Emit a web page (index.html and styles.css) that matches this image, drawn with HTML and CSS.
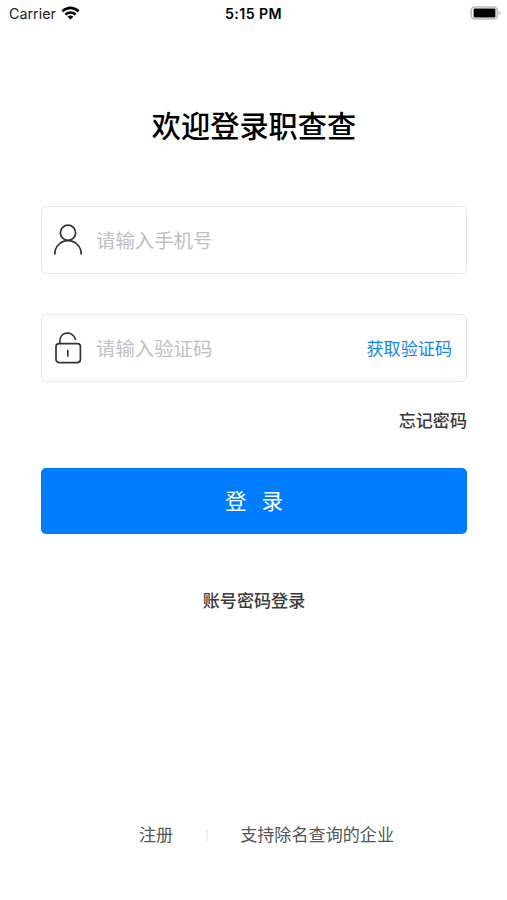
FILE: index.html
```html
<!DOCTYPE html>
<html lang="zh-CN">
<head>
<meta charset="UTF-8">
<meta name="viewport" content="width=device-width, initial-scale=1">
<title>登录</title>
<link rel="stylesheet" href="styles.css">
</head>
<body>
<div class="screen">
  <header class="status">
    <div class="carrier">Carrier
      <svg class="wifi" width="19" height="14" viewBox="0 0 19 14"><path d="M9.5 13.6 6.6 10.7Q9.5 8.5 12.4 10.7Z" fill="#000"/><path d="M4.4 8.6Q9.5 4.4 14.6 8.6M1.3 5.3Q9.5-1.5 17.7 5.3" fill="none" stroke="#000" stroke-width="2.6"/></svg>
    </div>
    <time class="time">5:15 PM</time>
    <svg class="battery" width="31" height="14" viewBox="0 0 31 14"><rect x="1.2" y="1" width="26" height="12" rx="3.4" fill="#fff" stroke="#bbb" stroke-width="1.6"/><rect x="3.6" y="2.6" width="21.8" height="8.8" rx="1.2" fill="#000"/><path d="M28.6 4.8Q30.4 5.5 30.4 7T28.6 9.2Z" fill="#bbb"/></svg>
  </header>
  <main class="content">
    <h1 class="title">欢迎登录职查查</h1>
    <div class="field">
      <svg class="icon" width="30" height="32" viewBox="0 0 30 32"><circle cx="15" cy="8.8" r="7.6"/><path d="M1.8 29.9A13.2 13.3 0 0 1 28.2 29.9"/></svg>
      <span class="placeholder">请输入手机号</span>
    </div>
    <div class="field">
      <svg class="icon" width="30" height="32" viewBox="0 0 30 32"><rect x="3" y="11.6" width="24.4" height="19" rx="3"/><path d="M6.8 11.3V9C7-.8 19.8-1.4 22.4 7.3M14.8 18.6v5.4"/></svg>
      <span class="placeholder">请输入验证码</span>
      <a class="code">获取验证码</a>
    </div>
    <a class="forgot">忘记密码</a>
    <button class="login">登<span class="gap"></span>录</button>
    <a class="switch">账号密码登录</a>
  </main>
  <footer class="footer"><a>注册</a><span class="divider"></span><a>支持除名查询的企业</a></footer>
</div>
</body>
</html>
```
FILE: styles.css
```css
* { box-sizing: border-box; }
body { margin: 0; background: #fff; color: #3a3a3a; font-family: Inter, "Noto Sans CJK SC", sans-serif; }
.screen { height: 900px; display: flex; flex-direction: column; }
.status { height: 26px; padding: 0 6px 0 9px; display: grid; grid-template-columns: 1fr auto 1fr; align-items: center; color: #000; font-size: 14.3px; }
.carrier { display: flex; align-items: center; gap: 5px; color: #222; }
.time { font-weight: 600; font-size: 14.2px; letter-spacing: .4px; margin: 0 3px 0 0; }
.battery { justify-self: end; }
.content { display: flex; flex-direction: column; padding: 0 40px 0 41px; }
.title { margin: 80px 0 58px; height: 42px; line-height: 42px; text-align: center; font-size: 29.2px; font-weight: 500; color: #000; }
.field { height: 68px; margin-bottom: 40px; padding: 0 14px 0 11px; display: flex; align-items: center; border: 1.5px solid #e8e8e8; border-radius: 5px; }
.icon { fill: none; stroke: #333; stroke-width: 1.7; stroke-linecap: round; }
.placeholder { margin: 0 0 2px 13px; font-size: 19.4px; color: #bfbfbf; }
.code { margin: 0 0 1px auto; font-size: 17.1px; color: #1684f0; }
.forgot { align-self: flex-end; margin-top: -14px; line-height: 26px; font-size: 17.1px; font-weight: 500; }
.login { height: 66px; margin-top: 34px; padding: 0 0 3px; display: flex; align-items: center; justify-content: center; border: 0; border-radius: 5px; background: #007dff; color: #fff; font: 21.5px Inter, "Noto Sans CJK SC", sans-serif; }
.gap { width: 15px; }
.switch { align-self: center; margin-top: 54px; line-height: 26px; font-size: 17.1px; font-weight: 500; }
.footer { margin: auto 0 52px 139px; display: flex; align-items: center; line-height: 26px; font-size: 17.1px; color: #555; }
.divider { width: 2px; height: 12px; margin: 0 32px 0 33px; background: #eee; }
```
